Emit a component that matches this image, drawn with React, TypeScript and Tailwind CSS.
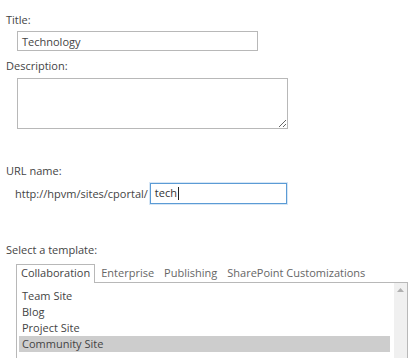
import React from 'react';

const templates = ['Team Site', 'Blog', 'Project Site', 'Community Site'];
const tabs = [
  { name: 'Enterprise', cls: 'ml-[6px]' },
  { name: 'Publishing', cls: 'ml-[10px]' },
  { name: 'SharePoint Customizations', cls: 'ml-[10px]' },
];

export default function App() {
  return (
    <div
      className="w-[412px] h-[358px] overflow-hidden bg-white text-[11px] text-[#444444] pl-[6px] pt-[12px]"
      style={{ fontFamily: '"Open Sans", "Noto Sans", sans-serif' }}
    >
      {/* Title */}
      <div className="leading-[16px]">Title:</div>
      <div className="ml-[11px] mt-[3px] w-[241px] h-[20px] border border-[#b8b8b8] flex items-center px-[4px] leading-none">
        Technology
      </div>

      {/* Description */}
      <div className="leading-[16px] mt-[7px]">Description:</div>
      <textarea
        readOnly
        className="block ml-[11px] mt-[4px] w-[271px] h-[51px] border border-[#b8b8b8] outline-none resize"
      />

      {/* URL */}
      <div className="leading-[16px] mt-[34px]">URL name:</div>
      <div className="flex items-center mt-[4px] pl-[9px]">
        <span className="leading-[16px]">http://hpvm/sites/cportal/</span>
        <div className="ml-[2px] w-[137px] h-[21px] border border-[#5b9bd5] shadow-[0_0_0_1px_#d6e6f5] flex items-center px-[4px] text-[#333]">
          tech<span className="w-px h-[13px] bg-[#222] ml-px" />
        </div>
      </div>

      {/* Template */}
      <div className="leading-[16px] mt-[38px]">Select a template:</div>
      <div className="ml-[10px] mt-[5px] w-[392px]">
        <div className="flex items-end h-[19px]">
          <div className="h-[19px] border border-b-0 border-[#b8b8b8] bg-white px-[4px] flex items-center relative z-10 -mb-px pb-px">
            Collaboration
          </div>
          {tabs.map(t => (
            <div key={t.name} className={`h-[18px] flex items-center text-[#666] ${t.cls}`}>{t.name}</div>
          ))}
        </div>
        <div className="border border-[#b8b8b8] h-[80px] flex">
          <div className="flex-1 pt-[5px] pl-[2px] pr-[4px]">
            {templates.map(t => (
              <div
                key={t}
                className={`h-[16px] leading-[16px] pl-[3px] ${t === 'Community Site' ? 'bg-[#cdcdcd]' : ''}`}
              >
                {t}
              </div>
            ))}
          </div>
          <div className="w-[13px] bg-[#f0f0f0] flex justify-center pt-[5px]">
            <svg width="7" height="4" viewBox="0 0 7 4"><polygon points="0,4 7,4 3.5,0" fill="#b0b0b0" /></svg>
          </div>
        </div>
      </div>
    </div>
  );
}
